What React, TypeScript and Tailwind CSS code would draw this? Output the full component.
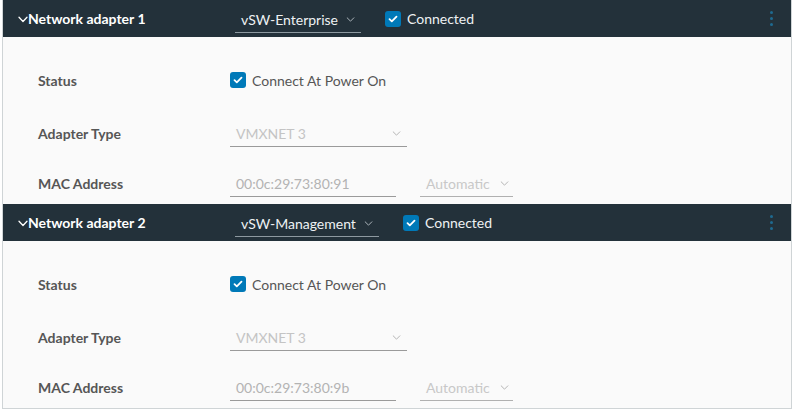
import React from "react";

const font = { fontFamily: "Lato, 'Noto Sans', sans-serif" };

function Check() {
  return (
    <span className="flex h-[16px] w-[16px] items-center justify-center rounded-[3px] bg-[#0079b8]">
      <svg width="10" height="8" viewBox="0 0 10 8" fill="none">
        <path d="M1.5 4.2 L3.8 6.3 L8.5 1.6" stroke="white" strokeWidth="1.8" strokeLinecap="round" strokeLinejoin="round" />
      </svg>
    </span>
  );
}

function Chevron({ color, size = 9 }: { color: string; size?: number }) {
  return (
    <svg width={size} height={Math.round(size * 0.6)} viewBox="0 0 10 6" fill="none">
      <path d="M1 1 L5 5 L9 1" stroke={color} strokeWidth="1.2" strokeLinecap="round" strokeLinejoin="round" />
    </svg>
  );
}

function Section({ n, sw, swW, mac }: { n: number; sw: string; swW: string; mac: string }) {
  return (
    <div>
      <div className="flex h-[37px] items-center bg-[#23313a]">
        <div className="flex w-[232px] items-center pl-[15px]">
          <svg width="10" height="7" viewBox="0 0 10 7" fill="none" className="mt-[1px]">
            <path d="M1 1.2 L5 5.5 L9 1.2" stroke="white" strokeWidth="1.3" strokeLinecap="round" strokeLinejoin="round" />
          </svg>
          <span className="text-[14px] font-bold text-white">Network adapter {n}</span>
        </div>
        <div className={`${swW} flex h-[26px] mt-[2px] items-center justify-between border-b border-[#8d99a0] pl-[6px] pr-[6px]`}>
          <span className="text-[14px] text-[#eef1f3]">{sw}</span>
          <Chevron color="#aab4ba" />
        </div>
        <div className="ml-[24px] flex items-center gap-[6px]">
          <Check />
          <span className="text-[14px] text-[#eef1f3]">Connected</span>
        </div>
        <div className="ml-auto mr-[18px] flex flex-col gap-[3px]">
          <span className="h-[3px] w-[3px] rounded-full bg-[#1e6a90]" />
          <span className="h-[3px] w-[3px] rounded-full bg-[#1e6a90]" />
          <span className="h-[3px] w-[3px] rounded-full bg-[#1e6a90]" />
        </div>
      </div>
      <div className="h-[167px] bg-[#fafafa] pt-[28px]">
        <div className="flex h-[30px] items-center">
          <span className="w-[227px] pl-[35px] text-[14px] font-bold text-[#565656]">Status</span>
          <div className="flex items-center gap-[6px]">
            <Check />
            <span className="text-[14px] text-[#565656]">Connect At Power On</span>
          </div>
        </div>
        <div className="mt-[23px] flex h-[30px] items-center">
          <span className="w-[227px] pl-[35px] text-[14px] font-bold text-[#565656]">Adapter Type</span>
          <div className="flex h-[26px] mt-[2px] w-[177px] items-center justify-between border-b border-[#9a9a9a] pl-[6px] pr-[6px]">
            <span className="text-[14px] text-[#c4c4c4]">VMXNET 3</span>
            <Chevron color="#b5b5b5" />
          </div>
        </div>
        <div className="mt-[20px] flex h-[30px] items-center">
          <span className="w-[227px] pl-[35px] text-[14px] font-bold text-[#565656]">MAC Address</span>
          <div className="flex h-[26px] mt-[2px] w-[166px] items-center border-b border-[#9a9a9a] pl-[6px]">
            <span className="text-[14px] text-[#b3b3b3]">{mac}</span>
          </div>
          <div className="ml-[24px] flex h-[26px] mt-[2px] w-[93px] items-center justify-between border-b border-[#b0b0b0] pl-[6px] pr-[4px]">
            <span className="text-[14px] text-[#c8c8c8]">Automatic</span>
            <Chevron color="#b5b5b5" />
          </div>
        </div>
      </div>
    </div>
  );
}

export default function App() {
  return (
    <div className="h-[409px] w-[793px] bg-white" style={font}>
      <div className="ml-[2px] w-[790px] border-x border-b border-[#cfd4d6]">
        <Section n={1} sw="vSW-Enterprise" swW="w-[126px]" mac="00:0c:29:73:80:91" />
        <Section n={2} sw="vSW-Management" swW="w-[144px]" mac="00:0c:29:73:80:9b" />
      </div>
    </div>
  );
}
